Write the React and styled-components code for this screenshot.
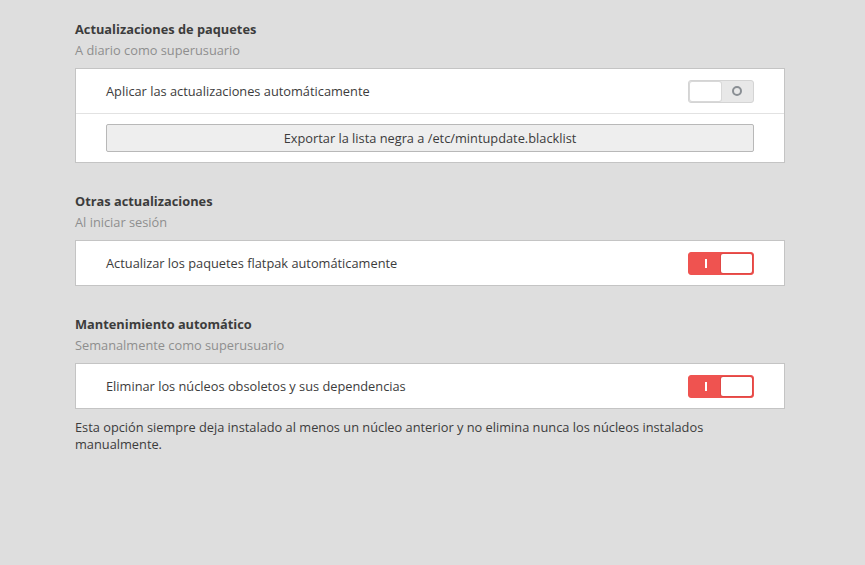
import React from 'react';
import styled, { createGlobalStyle } from 'styled-components';

const GlobalStyle = createGlobalStyle`
  html, body {
    margin: 0;
    padding: 0;
    background: #dedede;
  }
  body {
    font-family: "Open Sans", "DejaVu Sans", sans-serif;
    font-size: 12.8px;
    color: #3c3c3c;
  }
`;

const Page = styled.div`
  width: 865px;
  height: 565px;
  box-sizing: border-box;
  padding: 20px 80px 0 75px;
  display: flex;
  flex-direction: column;
`;

const Section = styled.section`
  display: flex;
  flex-direction: column;
  margin-bottom: 29px;
`;

const Title = styled.h2`
  margin: 0;
  font-size: 12.8px;
  font-weight: 700;
  line-height: 19px;
  color: #3c3c3c;
`;

const Subtitle = styled.div`
  margin-top: 2px;
  font-size: 12.8px;
  line-height: 19px;
  color: #8e8e8e;
`;

const Panel = styled.div`
  margin-top: 8px;
  background: #fff;
  border: 1px solid #c4c4c4;
  display: flex;
  flex-direction: column;
`;

const Row = styled.div`
  height: 44px;
  display: flex;
  align-items: center;
  justify-content: space-between;
  padding: 0 30px 0 30px;
`;

const ButtonRow = styled.div`
  padding: 10px 30px 10px 30px;
  border-top: 1px solid #e2e2e2;
`;

const Label = styled.span`
  font-size: 12.8px;
  color: #3c3c3c;
`;

const WideButton = styled.button`
  width: 100%;
  height: 28px;
  box-sizing: border-box;
  border: 1px solid #b8b8b8;
  border-radius: 2px;
  background: #eeeeee;
  font-family: inherit;
  font-size: 12.8px;
  color: #3c3c3c;
  cursor: pointer;
`;

const SwitchTrack = styled.div`
  width: 66px;
  height: 23px;
  box-sizing: border-box;
  border-radius: 3px;
  border: 1px solid ${p => (p.$on ? '#ef5350' : '#d4d4d4')};
  background: ${p => (p.$on ? '#ef5350' : '#e8e8e8')};
  display: flex;
  align-items: center;
  flex-direction: ${p => (p.$on ? 'row' : 'row-reverse')};
  padding: 1px;
`;

const SwitchSide = styled.div`
  flex: 1;
  height: 100%;
  display: flex;
  align-items: center;
  justify-content: center;
`;

const Knob = styled.div`
  width: 31px;
  height: 19px;
  border-radius: 2px;
  background: #fff;
  box-shadow: 0 0 0 1px ${p => (p.$on ? '#e04845' : '#d8d8d8')};
`;

const OnMark = styled.div`
  width: 2px;
  height: 9px;
  background: #fff;
`;

const OffMark = styled.div`
  width: 6px;
  height: 6px;
  border-radius: 50%;
  border: 2px solid #8a8f94;
`;

const Note = styled.p`
  margin: -19px 0 0 0;
  font-size: 12.8px;
  line-height: 17px;
  color: #3c3c3c;
`;

function Switch({ on }) {
  return (
    <SwitchTrack $on={on}>
      <SwitchSide>{on ? <OnMark /> : <OffMark />}</SwitchSide>
      <Knob $on={on} />
    </SwitchTrack>
  );
}

export default function App() {
  return (
    <>
      <GlobalStyle />
      <Page>
        <Section>
          <Title>Actualizaciones de paquetes</Title>
          <Subtitle>A diario como superusuario</Subtitle>
          <Panel>
            <Row>
              <Label>Aplicar las actualizaciones automáticamente</Label>
              <Switch on={false} />
            </Row>
            <ButtonRow>
              <WideButton>Exportar la lista negra a /etc/mintupdate.blacklist</WideButton>
            </ButtonRow>
          </Panel>
        </Section>
        <Section>
          <Title>Otras actualizaciones</Title>
          <Subtitle>Al iniciar sesión</Subtitle>
          <Panel>
            <Row>
              <Label>Actualizar los paquetes flatpak automáticamente</Label>
              <Switch on />
            </Row>
          </Panel>
        </Section>
        <Section>
          <Title>Mantenimiento automático</Title>
          <Subtitle>Semanalmente como superusuario</Subtitle>
          <Panel>
            <Row>
              <Label>Eliminar los núcleos obsoletos y sus dependencias</Label>
              <Switch on />
            </Row>
          </Panel>
        </Section>
        <Note>
          Esta opción siempre deja instalado al menos un núcleo anterior y no elimina nunca los núcleos instalados manualmente.
        </Note>
      </Page>
    </>
  );
}
